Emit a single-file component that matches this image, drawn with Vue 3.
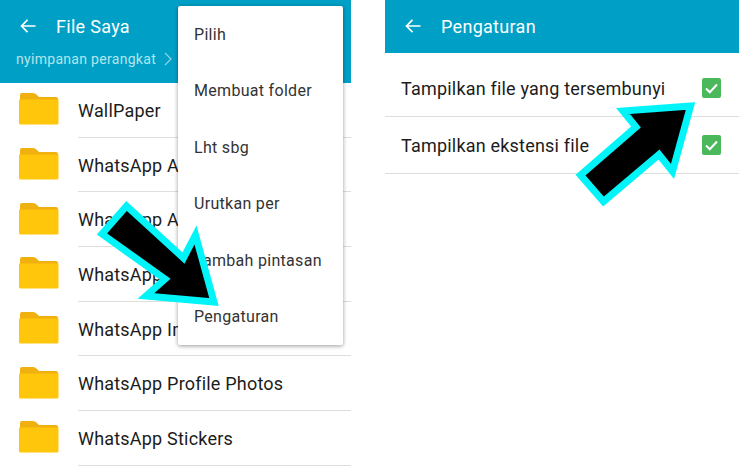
<template>
  <div class="page">
    <section class="panel files">
      <header class="bar">
        <div class="bar-top">
          <svg class="back" width="16" height="16" viewBox="0 0 16 16">
            <path d="M15.5 8H1.5M7.5 1.8L1.5 8l6 6.2" fill="none" stroke="#fff" stroke-width="1.7" />
          </svg>
          <span class="bar-title">File Saya</span>
        </div>
        <div class="crumb">
          <span>nyimpanan perangkat</span>
          <svg width="8" height="14" viewBox="0 0 8 14">
            <path d="M1 1l6 6-6 6" fill="none" stroke="#8fd3e4" stroke-width="1.2" />
          </svg>
        </div>
      </header>

      <ul class="list">
        <li v-for="name in folders" :key="name" class="row">
          <svg class="folder" width="40" height="33" viewBox="0 0 40 33">
            <path d="M1 6V3q0-2 2-2h11q2 0 4 2l2 2h17q2 0 2 2v3H1z" fill="#f0b110" />
            <path d="M0 7.500h39.500V31q0 1.500-1.500 1.500H1.500Q0 32.500 0 31z" fill="#ffc60b" />
          </svg>
          <span class="row-name">{{ name }}</span>
        </li>
      </ul>

      <div class="menu">
        <div v-for="item in menuItems" :key="item" class="menu-item">{{ item }}</div>
      </div>
    </section>

    <section class="panel settings">
      <header class="bar bar-small">
        <div class="bar-top">
          <svg class="back" width="16" height="16" viewBox="0 0 16 16">
            <path d="M15.5 8H1.5M7.5 1.800L1.5 8l6 6.200" fill="none" stroke="#fff" stroke-width="1.7" />
          </svg>
          <span class="bar-title">Pengaturan</span>
        </div>
      </header>

      <div class="options">
        <div v-for="opt in options" :key="opt" class="option">
          <span>{{ opt }}</span>
          <svg width="19" height="20" viewBox="0 0 19 20">
            <rect width="19" height="20" rx="2" fill="#4cb85c" />
            <path d="M4 10.500l3.800 3.700L15 6.500" fill="none" stroke="#fff" stroke-width="2" />
          </svg>
        </div>
      </div>
    </section>

    <svg class="arrows" width="739" height="468" viewBox="0 0 739 468">
      <polygon
        points="126.500,206 102,234 165,279 146,296 214,302 195.500,235 183.500,258"
        fill="#000" stroke="#00f4f8" stroke-width="7" stroke-miterlimit="10" />
      <polygon
        points="690.500,106 623,111 636,127 580.500,175 603.500,201.500 659,154.500 672.500,171.500"
        fill="#000" stroke="#00f4f8" stroke-width="7" stroke-miterlimit="10" />
    </svg>
  </div>
</template>

<script setup>
const folders = [
  'WallPaper',
  'WhatsApp Animated Gifs',
  'WhatsApp Audio',
  'WhatsApp Documents',
  'WhatsApp Images',
  'WhatsApp Profile Photos',
  'WhatsApp Stickers',
]

const menuItems = ['Pilih', 'Membuat folder', 'Lht sbg', 'Urutkan per', 'Tambah pintasan', 'Pengaturan']

const options = ['Tampilkan file yang tersembunyi', 'Tampilkan ekstensi file']
</script>

<style>
html,
body {
  background: #fff;
  overflow: hidden;
}
</style>

<style scoped>
.page {
  position: relative;
  display: flex;
  width: 739px;
  height: 468px;
  overflow: hidden;
  background: #fff;
  font-family: Roboto, "Liberation Sans", sans-serif;
  color: #1c1c1c;
}

.panel {
  position: relative;
}

.files {
  width: 351px;
  margin-right: 34px;
}

.settings {
  flex: 1;
}

.bar {
  height: 83px;
  background: #00a0c6;
  color: #fff;
  box-sizing: border-box;
  padding-top: 16px;
}

.bar-small {
  height: 53px;
}

.bar-top {
  display: flex;
  align-items: center;
  height: 20px;
  padding-left: 20px;
}

.back {
  margin-right: 20px;
  flex: none;
}

.bar-title {
  font-size: 18px;
  letter-spacing: 0.3px;
}

.crumb {
  display: flex;
  align-items: center;
  gap: 8px;
  margin-top: 15px;
  padding-left: 16px;
  font-size: 14px;
  letter-spacing: 0.3px;
  color: #b5e4ef;
}

.list {
  list-style: none;
  margin: 0;
  padding: 0;
}

.row {
  display: flex;
  align-items: center;
  height: 54.700px;
  padding-left: 19px;
  box-sizing: border-box;
  position: relative;
  border-bottom: 0;
}

.row::after {
  content: "";
  position: absolute;
  left: 78px;
  right: 0;
  bottom: 0;
  height: 1px;
  background: #dedede;
}

.folder {
  flex: none;
  margin-right: 19px;
  margin-top: -3px;
}

.row-name {
  font-size: 18px;
  letter-spacing: 0.2px;
  white-space: nowrap;
}

.menu {
  position: absolute;
  left: 178px;
  top: 6px;
  width: 165px;
  height: 339px;
  background: #fff;
  border-radius: 2px;
  box-shadow: 0 1px 4px rgba(0, 0, 0, 0.4);
  display: flex;
  flex-direction: column;
}

.menu-item {
  flex: 1;
  display: flex;
  align-items: center;
  padding-left: 16px;
  font-size: 16px;
  letter-spacing: 0.3px;
  color: #333;
}

.options {
  padding-top: 7px;
}

.option {
  display: flex;
  align-items: center;
  justify-content: space-between;
  height: 57px;
  padding: 0 18px 0 16px;
  box-sizing: border-box;
  border-bottom: 1px solid #dedede;
  font-size: 18px;
  letter-spacing: 0.2px;
}

.arrows {
  position: absolute;
  left: 0;
  top: 0;
  pointer-events: none;
}
</style>
